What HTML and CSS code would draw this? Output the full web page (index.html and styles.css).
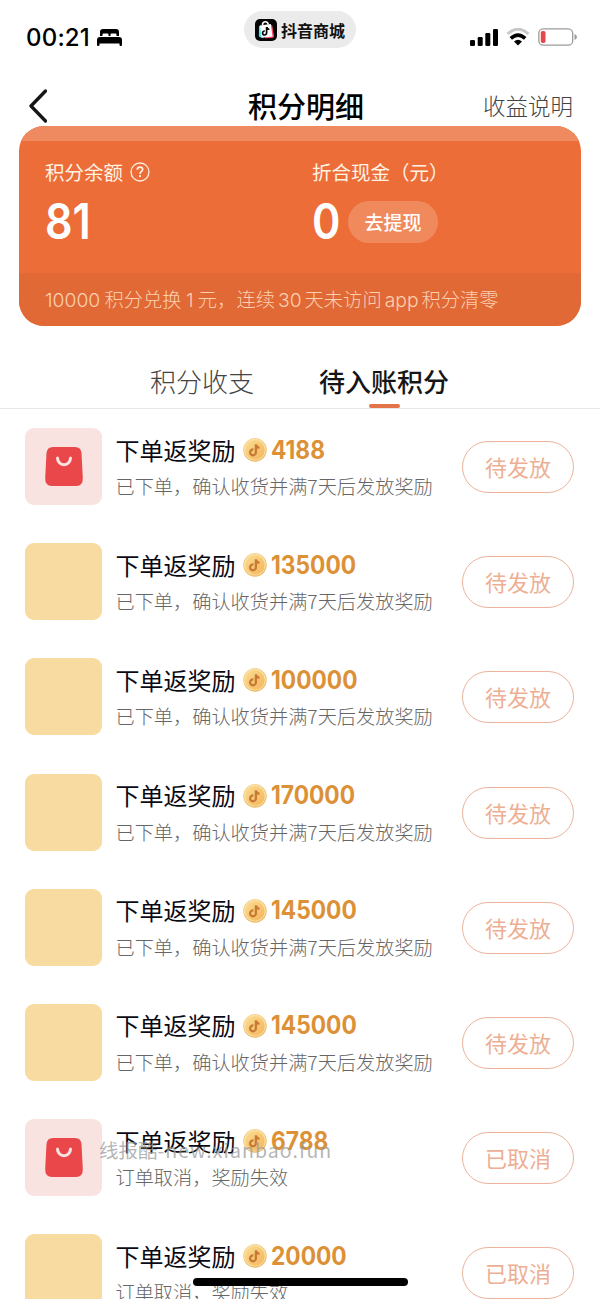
FILE: index.html
```html
<!DOCTYPE html>
<html lang="zh-CN">
<head>
<meta charset="utf-8">
<title>积分明细</title>
<link rel="stylesheet" href="styles.css">
</head>
<body>
<svg class="defs" aria-hidden="true">
  <defs>
    <linearGradient id="gold" x1="0" y1="0" x2="1" y2="1"><stop offset="0" stop-color="#fbdc92"/><stop offset="1" stop-color="#f3b55c"/></linearGradient>
    <symbol id="coin" viewBox="0 0 24 24">
      <circle cx="12" cy="12" r="11.700" fill="#ebb964"/>
      <circle cx="11.800" cy="11.500" r="11" fill="#fbdf9f"/>
      <circle cx="12" cy="12" r="9.700" fill="url(#gold)"/>
      <path d="M12.900 6.200v8.200a2.900 2.900 0 1 1-2.500-2.900M12.900 6.400c.4 2 1.600 3.100 3.600 3.400" fill="none" stroke="#c87933" stroke-width="2.300"/>
    </symbol>
    <symbol id="bag" viewBox="0 0 38 39">
      <path d="M8 0H30Q36 0 36.500 6L37.800 31Q38 39 31 39H7Q0 39 .2 31L1.500 6Q2 0 8 0Z" fill="#ea474b"/>
      <path d="M12.500 11a6.500 6.800 0 0 0 13 0" fill="none" stroke="#fbe3e1" stroke-width="3" stroke-linecap="round"/>
    </symbol>
  </defs>
</svg>
<div class="screen">
  <header class="status">
    <div class="clock">00:21
      <svg width="25" height="17" viewBox="0 0 25 17"><path d="M3 7V3Q3 0 6 0H19Q22 0 22 3V7H19.500V5.500Q19.500 4.500 18.500 4.500H14.500Q13.500 4.500 13.500 5.500V7H11.500V5.500Q11.500 4.500 10.500 4.500H6.500Q5.500 4.500 5.500 5.500V7ZM3 8H22Q25 8 25 11V16Q25 17 24 17H23.500Q22.500 17 22.500 16V14.500H2.500V16Q2.500 17 1.500 17H1Q0 17 0 16V11Q0 8 3 8Z"/></svg>
    </div>
    <div class="app-pill">
      <svg width="22" height="22" viewBox="0 0 22 22"><rect width="22" height="22" rx="5" fill="#050505"/><path d="M4 7L6 6.500 9 18.500H6Q4 18.500 3.900 16.500Z" fill="#4ee3e6"/><path d="M14 5.500L17.200 6.200 19 17Q19 18.800 17 19L10 19.300Z" fill="#f34b69"/><path d="M5 6.500L15.800 5 17.500 17.500 6.500 18.800Z" fill="#fff"/><path d="M7.500 6.500Q7.300 3 10 2.800T13.300 5.500" fill="none" stroke="#fff" stroke-width="1.500"/><path d="M11.600 8v6a2 2 0 1 1-1.800-2M11.700 8.200q.5 1.900 2.600 2.100" fill="none" stroke="#050505" stroke-width="1.700"/></svg>
      <span>抖音商城</span>
    </div>
    <div class="indicators">
      <svg width="28" height="17" viewBox="0 0 28 17"><rect y="11" width="5" height="6" rx="1.300"/><rect x="7.700" y="8" width="5" height="9" rx="1.300"/><rect x="15.300" y="4" width="5" height="13" rx="1.300"/><rect x="23" width="5" height="17" rx="1.300"/></svg>
      <svg class="wifi" width="24" height="18" viewBox="0 0 24 18"><path d="M1.500 6Q12-3.500 22.500 6" fill="none" stroke="#c9c9c9" stroke-width="3"/><path d="M4.800 10.300Q12 3.800 19.200 10.300" fill="none" stroke="#000" stroke-width="3.600"/><path d="M8 13.500Q12 10 16 13.500L12 17.600Z"/></svg>
      <svg class="battery" width="39" height="18" viewBox="0 0 39 18"><rect x=".8" y=".8" width="33.900" height="16.400" rx="4.500" fill="#fff" stroke="#9b9b9b" stroke-width="1.300"/><rect x="2.800" y="3" width="4.700" height="12" rx="1.800" fill="#e5484a"/><path d="M36.500 6Q39 7 39 9T36.500 12Z" fill="#9b9b9b"/></svg>
    </div>
  </header>
  <nav class="titlebar">
    <svg width="20" height="34" viewBox="0 0 20 34"><path d="M18.500 2L4 17 18.500 32" fill="none" stroke="#161616" stroke-width="3.300" stroke-linecap="round" stroke-linejoin="round"/></svg>
    <h1>积分明细</h1>
    <span class="explain">收益说明</span>
  </nav>
  <section class="card">
    <div class="card-strip"></div>
    <div class="card-main">
      <div class="balance">
        <div class="label">积分余额
          <svg width="20" height="20" viewBox="0 0 20 20"><circle cx="10" cy="10" r="9" fill="none" stroke="#fff1df" stroke-width="1.300"/><path d="M7.300 7.700Q7.400 5.200 10 5.200T12.700 7.600C12.700 9.400 10 9.400 10 11.900" fill="none" stroke="#fff1df" stroke-width="1.700"/><circle cx="10" cy="14.200" r="1.100" fill="#fff1df"/></svg>
        </div>
        <div class="amount"><b>81</b></div>
      </div>
      <div class="cash">
        <div class="label">折合现金（元）</div>
        <div class="amount"><b>0</b><span class="withdraw">去提现</span></div>
      </div>
    </div>
    <div class="card-note">10000<i class="wide"></i>积分兑换<i class="wide"></i>1<i class="wide"></i>元，连续<i></i>30<i></i>天未访问<i></i>app<i></i>积分清零</div>
  </section>
  <div class="tabs"><span class="tab">积分收支</span><span class="tab active">待入账积分</span></div>
  <main class="list">
    <div class="row"><div class="thumb order"><svg width="38" height="39"><use href="#bag"/></svg></div><div class="info"><div class="title">下单返奖励<svg width="24" height="24"><use href="#coin"/></svg><b>4188</b></div><div class="desc">已下单，确认收货并满7天后发放奖励</div></div><span class="state">待发放</span></div>
    <div class="row"><div class="thumb"></div><div class="info"><div class="title">下单返奖励<svg width="24" height="24"><use href="#coin"/></svg><b>135000</b></div><div class="desc">已下单，确认收货并满7天后发放奖励</div></div><span class="state">待发放</span></div>
    <div class="row"><div class="thumb"></div><div class="info"><div class="title">下单返奖励<svg width="24" height="24"><use href="#coin"/></svg><b>100000</b></div><div class="desc">已下单，确认收货并满7天后发放奖励</div></div><span class="state">待发放</span></div>
    <div class="row"><div class="thumb"></div><div class="info"><div class="title">下单返奖励<svg width="24" height="24"><use href="#coin"/></svg><b>170000</b></div><div class="desc">已下单，确认收货并满7天后发放奖励</div></div><span class="state">待发放</span></div>
    <div class="row"><div class="thumb"></div><div class="info"><div class="title">下单返奖励<svg width="24" height="24"><use href="#coin"/></svg><b>145000</b></div><div class="desc">已下单，确认收货并满7天后发放奖励</div></div><span class="state">待发放</span></div>
    <div class="row"><div class="thumb"></div><div class="info"><div class="title">下单返奖励<svg width="24" height="24"><use href="#coin"/></svg><b>145000</b></div><div class="desc">已下单，确认收货并满7天后发放奖励</div></div><span class="state">待发放</span></div>
    <div class="row"><div class="thumb order"><svg width="38" height="39"><use href="#bag"/></svg></div><div class="info"><div class="title">下单返奖励<svg width="24" height="24"><use href="#coin"/></svg><b>6788</b></div><div class="desc">订单取消，奖励失效</div></div><span class="state">已取消</span></div>
    <div class="row"><div class="thumb"></div><div class="info"><div class="title">下单返奖励<svg width="24" height="24"><use href="#coin"/></svg><b>20000</b></div><div class="desc">订单取消，奖励失效</div></div><span class="state">已取消</span></div>
  </main>
  <div class="watermark">线报酷<span>-new.xianbao.fun</span></div>
  <div class="home-indicator"></div>
</div>
</body>
</html>
```
FILE: styles.css
```css
* { box-sizing: border-box; }
body { margin: 0; background: #fff; font-family: "Noto Sans CJK SC", sans-serif; color: #111; }
svg { display: block; flex: none; }
.defs { position: absolute; width: 0; height: 0; }
.screen { position: relative; width: 600px; height: 1299px; overflow: hidden; white-space: nowrap; }

.status { display: grid; grid-template-columns: 218px 112px 1fr; height: 86px; padding: 11px 23px 0 26px; }
.clock { display: flex; align-items: center; gap: 7px; height: 53px; font: 500 24px/53px Inter, sans-serif; letter-spacing: .2px; color: #000; }
.app-pill { display: flex; align-items: center; gap: 4px; height: 37px; padding-left: 11px; border-radius: 19px; background: #ebebeb; font-size: 16px; font-weight: 700; line-height: 36px; color: #111; }
.indicators { display: flex; align-items: center; justify-content: flex-end; height: 52px; }
.wifi { margin-left: 8px; }
.battery { margin-left: 8px; }

.titlebar { display: grid; grid-template-columns: 166px 1fr 154px; align-items: center; height: 40px; padding: 0 27px; }
.titlebar h1 { margin: -2px 0 0; text-align: center; font-size: 29px; font-weight: 500; line-height: 38px; color: #000; }
.explain { margin-top: -2px; text-align: right; font-size: 22.500px; line-height: 38px; font-weight: 300; color: #444; }

.card { display: flex; flex-direction: column; width: 562px; height: 200px; margin-left: 19px; border-radius: 25px; overflow: hidden; background: #ed6d39; color: #fff3e4; }
.card-strip { height: 15px; background: #ee8960; }
.card-main { display: flex; height: 132px; padding: 16px 26px 0; }
.balance { width: 267px; }
.label { display: flex; align-items: center; gap: 7px; height: 30px; font-size: 19.500px; line-height: 30px; }
.amount { display: flex; align-items: center; height: 70px; color: #fff; }
.amount b { width: 27px; transform: scaleX(.88); transform-origin: left; font: 600 49px/70px Inter, sans-serif; }
.withdraw { width: 90px; height: 42px; margin-left: 9px; border-radius: 21px; background: #f08a5d; text-align: center; font-size: 19px; font-weight: 500; line-height: 41px; }
.card-note { height: 53px; padding-left: 26px; background: #e16936; font: 300 19.300px/55px Inter, "Noto Sans CJK SC", sans-serif; color: #fbd0b0; }
.card-note i { display: inline-block; width: 3px; }
.card-note .wide { width: 4.300px; }

.tabs { display: flex; gap: 65px; height: 83px; padding: 36px 0 0 150px; border-bottom: 1px solid #e8e8e8; font-size: 26px; line-height: 38px; }
.tab { font-weight: 300; color: #444; }
.tab.active { display: flex; flex-direction: column; align-items: center; justify-content: space-between; font-weight: 500; color: #161616; }
.tab.active::after { content: ""; width: 31px; height: 4px; border-radius: 2px; background: #e37449; }

.list { padding: 19px 26px 0 25px; }
.row { display: flex; height: 115.200px; }
.thumb { display: flex; align-items: center; justify-content: center; width: 77px; height: 77px; border-radius: 9px; background: #f7dba0; }
.thumb.order { background: #f8e3e1; }
.info { flex: 1; padding-left: 13.500px; }
.title { display: flex; align-items: center; height: 43px; font-size: 24px; font-weight: 400; line-height: 42px; color: #0a0a14; }
.title svg { margin: 1px 4px 0 7px; }
.title b { transform: scaleX(.91); transform-origin: left; font: 700 25px/42px Inter, sans-serif; color: #dc9136; }
.desc { font-size: 19.200px; font-weight: 300; line-height: 31px; color: #666; }
.state { width: 112px; height: 52px; margin-top: 13px; border: 1.500px solid #edb39d; border-radius: 26px; text-align: center; font-size: 22px; line-height: 48px; color: #edaf94; }

.watermark { position: absolute; left: 99px; top: 1136px; font-size: 19.500px; line-height: 28px; color: #999b; }
.watermark span { letter-spacing: 1.080px; }
.home-indicator { position: absolute; left: 193px; top: 1278px; width: 215px; height: 8px; border-radius: 4px; background: #000; }
```
